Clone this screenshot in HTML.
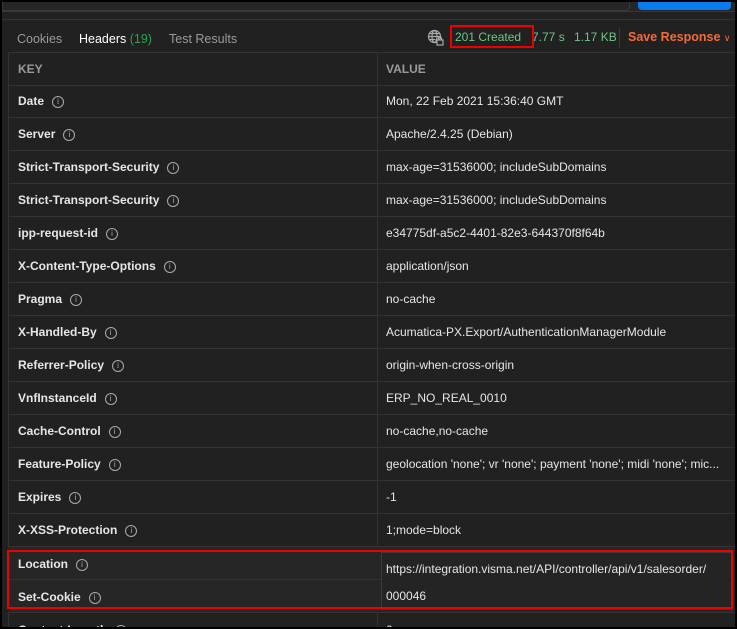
<!DOCTYPE html><html><head><style>
body{margin:0;width:737px;height:629px;overflow:hidden;background:#000;font-family:"Liberation Sans",sans-serif;font-size:12px;}
#f{position:absolute;left:2px;top:2px;width:733px;height:625px;background:#212121;overflow:hidden}
.top{position:absolute;left:0;top:0;width:733px;height:9px;background:#262626;border-bottom:1px solid #383838}
.tab{position:absolute;top:30px;font-size:12.5px;color:#9a9a9a}
.row{position:absolute;left:6px;width:727px;height:32px;border-bottom:1px solid #333}
.k{position:absolute;left:10px;top:9px;color:#e6e6e6;font-weight:bold;font-size:12px}
.v{position:absolute;left:378px;top:9px;color:#e6e6e6;font-size:12px;white-space:nowrap}
.i{display:inline-block;width:10px;height:10px;border:1px solid #aaa;border-radius:50%;font-size:8px;line-height:10px;text-align:center;color:#aaa;margin-left:8px;vertical-align:1px;font-weight:normal}
</style></head><body><div id="f">
<div class="top"></div>
<div style="position:absolute;left:0;top:0;width:626px;height:8px;border:1px solid #3a3a3a;border-top:none;border-radius:0 0 4px 0;background:#262626"></div>
<div style="position:absolute;left:636px;top:0;width:93px;height:8px;background:#097bed;border-radius:0 0 4px 4px"></div>
<div style="position:absolute;left:0;top:17px;width:733px;height:1px;background:#333"></div>
<div class="tab" style="left:15px">Cookies</div>
<div class="tab" style="left:77px;color:#fff">Headers <span style="color:#2ba24c">(19)</span></div>
<div class="tab" style="left:167px">Test Results</div>
<svg style="position:absolute;left:425px;top:27px" width="17" height="17" viewBox="0 0 17 17" fill="none" stroke="#aaa" stroke-width="1.2"><circle cx="7.5" cy="7.5" r="6"/><ellipse cx="7.5" cy="7.5" rx="2.5" ry="6"/><path d="M1.5 7.5h12M2.5 4.5h10M2.5 10.5h6"/><rect x="10" y="11" width="6" height="5" fill="#212121"/><path d="M11.5 11v-1.5a1.5 1.5 0 0 1 3 0V11"/></svg>
<div style="position:absolute;left:453px;top:28px;color:#6cc786;font-size:12px">201 Created</div>
<div style="position:absolute;left:530px;top:28px;color:#6cc786;font-size:12px">7.77 s</div>
<div style="position:absolute;left:572px;top:28px;color:#6cc786;font-size:12px">1.17 KB</div>
<div style="position:absolute;left:617px;top:26px;width:1px;height:20px;background:#3a3a3a"></div>
<div style="position:absolute;left:626px;top:28px;color:#f26b3a;font-size:12.5px;font-weight:bold">Save Response <span style="font-weight:normal;font-size:9px">&#8744;</span></div>
<div style="position:absolute;left:448px;top:23px;width:84px;height:23px;border:2px solid #e00;box-sizing:border-box"></div>
<div style="position:absolute;left:6px;top:50px;width:1px;height:580px;background:#333"></div>
<div style="position:absolute;left:375px;top:50px;width:1px;height:580px;background:#333"></div>
<div class="row" style="top:50px;border-top:1px solid #333;height:32px"><span class="k" style="color:#9a9a9a">KEY</span><span class="v" style="color:#9a9a9a;font-weight:bold">VALUE</span></div>
<div class="row" style="top:83px"><span class="k">Date<span class="i">i</span></span><span class="v">Mon, 22 Feb 2021 15:36:40 GMT</span></div>
<div class="row" style="top:116px"><span class="k">Server<span class="i">i</span></span><span class="v">Apache/2.4.25 (Debian)</span></div>
<div class="row" style="top:149px"><span class="k">Strict-Transport-Security<span class="i">i</span></span><span class="v">max-age=31536000; includeSubDomains</span></div>
<div class="row" style="top:182px"><span class="k">Strict-Transport-Security<span class="i">i</span></span><span class="v">max-age=31536000; includeSubDomains</span></div>
<div class="row" style="top:215px"><span class="k">ipp-request-id<span class="i">i</span></span><span class="v">e34775df-a5c2-4401-82e3-644370f8f64b</span></div>
<div class="row" style="top:248px"><span class="k">X-Content-Type-Options<span class="i">i</span></span><span class="v">application/json</span></div>
<div class="row" style="top:281px"><span class="k">Pragma<span class="i">i</span></span><span class="v">no-cache</span></div>
<div class="row" style="top:314px"><span class="k">X-Handled-By<span class="i">i</span></span><span class="v">Acumatica-PX.Export/AuthenticationManagerModule</span></div>
<div class="row" style="top:347px"><span class="k">Referrer-Policy<span class="i">i</span></span><span class="v">origin-when-cross-origin</span></div>
<div class="row" style="top:380px"><span class="k">VnfInstanceId<span class="i">i</span></span><span class="v">ERP_NO_REAL_0010</span></div>
<div class="row" style="top:413px"><span class="k">Cache-Control<span class="i">i</span></span><span class="v">no-cache,no-cache</span></div>
<div class="row" style="top:446px"><span class="k">Feature-Policy<span class="i">i</span></span><span class="v">geolocation 'none'; vr 'none'; payment 'none'; midi 'none'; mic...</span></div>
<div class="row" style="top:479px"><span class="k">Expires<span class="i">i</span></span><span class="v">-1</span></div>
<div class="row" style="top:512px"><span class="k">X-XSS-Protection<span class="i">i</span></span><span class="v">1;mode=block</span></div>
<div class="row" style="top:545px;background:#262626"><span class="k" style="top:10px">Location<span class="i">i</span></span></div>
<div class="row" style="top:578px;background:#262626"><span class="k" style="top:10px">Set-Cookie<span class="i">i</span></span></div>
<div style="position:absolute;left:379px;top:550px;width:350px;height:56px;background:#242424;border:1px solid #3a3a3a"></div>
<div class="v" style="top:560px;left:384px">https://integration.visma.net/API/controller/api/v1/salesorder/</div>
<div class="v" style="top:587px;left:384px">000046</div>
<div class="row" style="top:611px"><span class="k" style="top:10px">Content-Length<span class="i">i</span></span><span class="v" style="top:10px">0</span></div>
<div style="position:absolute;left:5px;top:548px;width:722px;height:55px;border:2px solid #e00"></div>
</div>
<div style="position:absolute;left:0;top:627px;width:737px;height:2px;background:#000"></div>
</body></html>
